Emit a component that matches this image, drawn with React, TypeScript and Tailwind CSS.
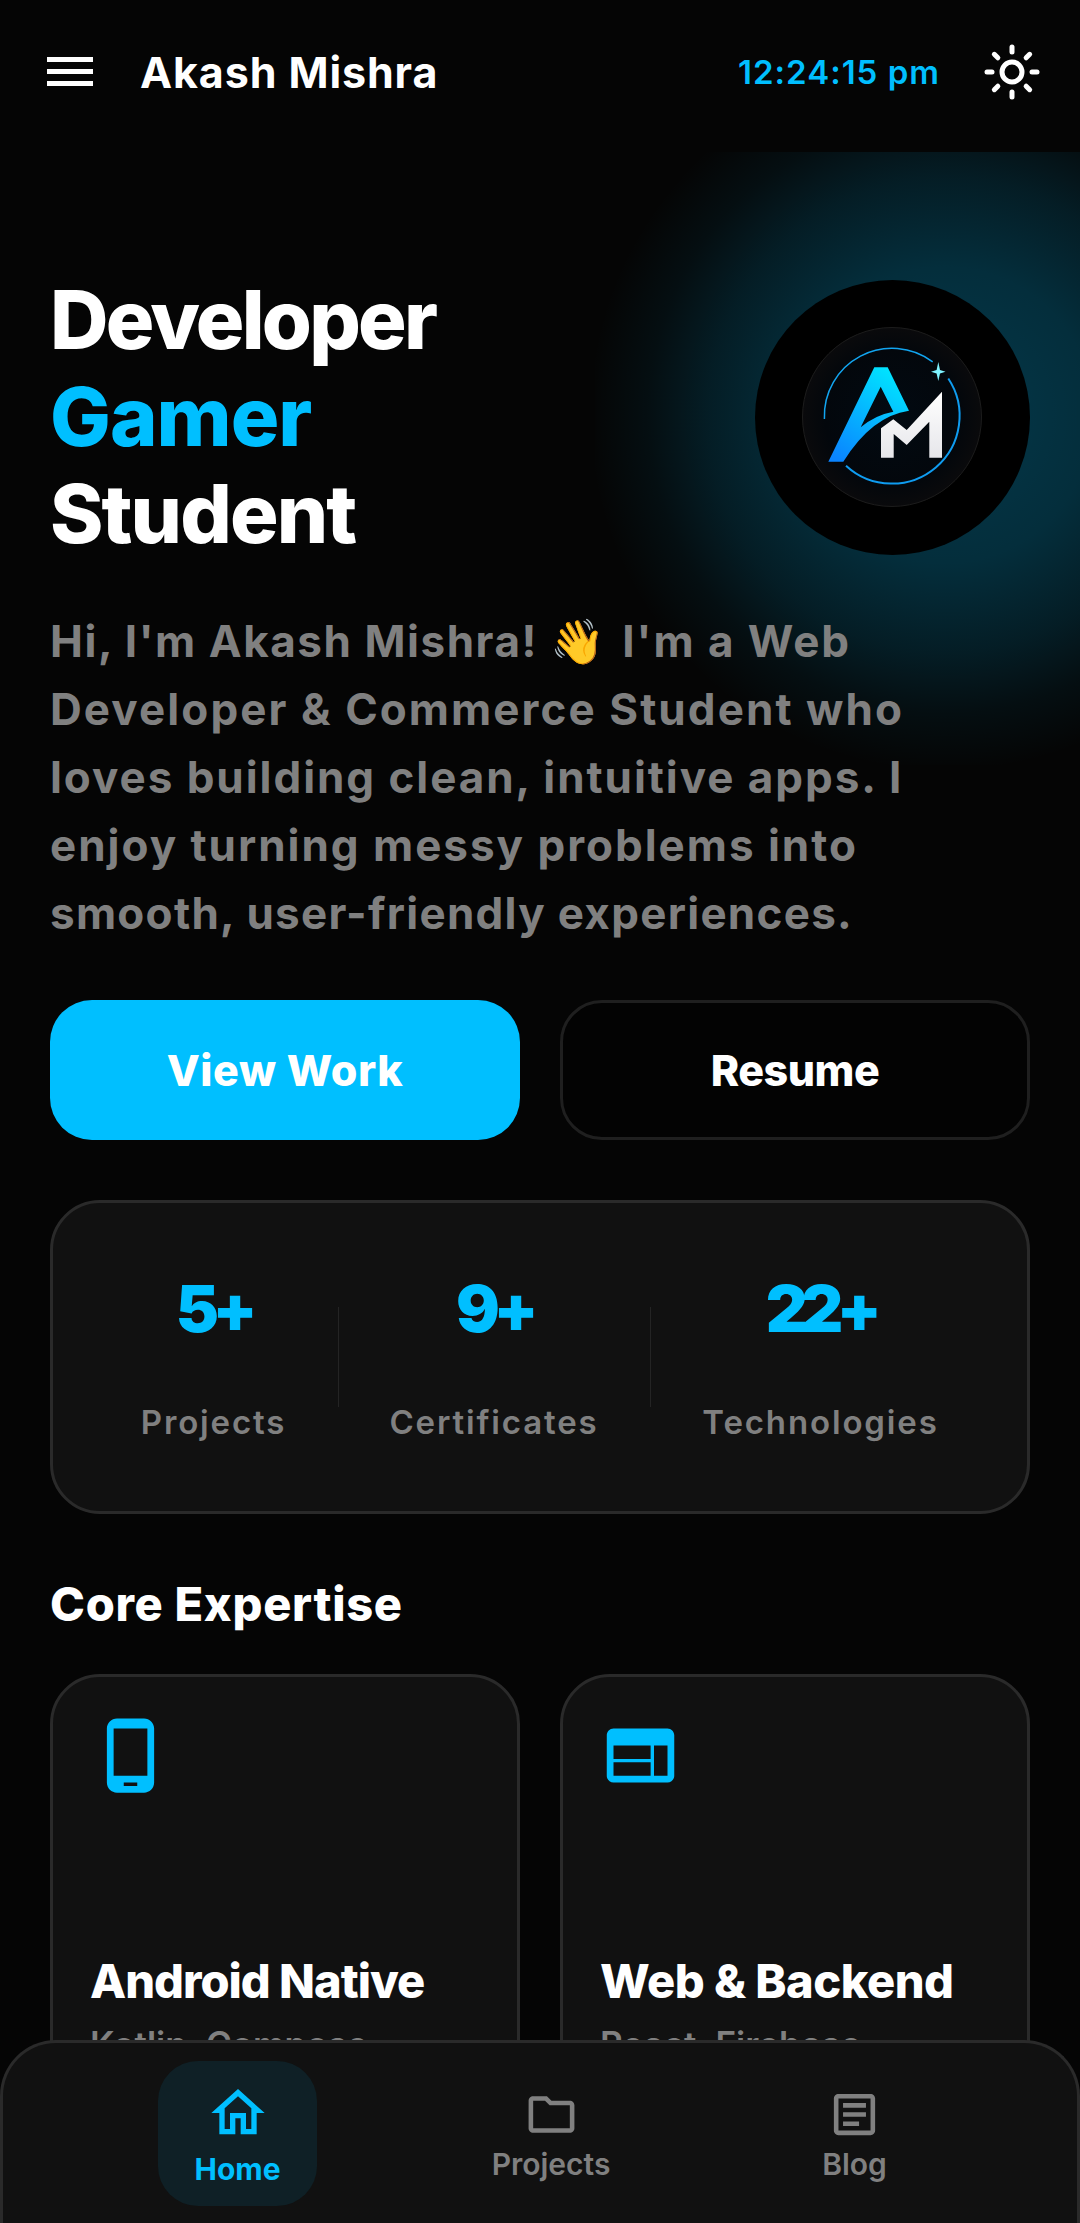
import React from "react";
import { Sun } from "lucide-react";
import { MdOutlineHome, MdOutlineFolder, MdOutlineArticle, MdOutlinePhoneAndroid, MdWeb } from "react-icons/md";

function Logo() {
  return (
    <svg viewBox="755 280 275 275" className="w-[275px] h-[275px] block">
      <defs>
        <linearGradient id="a" x1="0.75" y1="0" x2="0.15" y2="1">
          <stop offset="0" stopColor="#00e5ff" />
          <stop offset="1" stopColor="#0a84ff" />
        </linearGradient>
        <linearGradient id="m" x1="0" y1="0" x2="0" y2="1">
          <stop offset="0" stopColor="#ffffff" />
          <stop offset="1" stopColor="#e6e6ea" />
        </linearGradient>
        <radialGradient id="d" cx="0.5" cy="0.5" r="0.5">
          <stop offset="0" stopColor="#020a12" />
          <stop offset="0.75" stopColor="#03070c" />
          <stop offset="1" stopColor="#0a0a0c" />
        </radialGradient>
      </defs>
      <circle cx="892.5" cy="417.5" r="137.5" fill="#000" />
      <circle cx="892" cy="417" r="89.5" fill="url(#d)" stroke="#1c1c1c" strokeWidth="1" />
      <path d="M932.7 361.9 A67.7 67.7 0 0 0 824.4 419" fill="none" stroke="#12a5f0" strokeWidth="1.5" />
      <path d="M948.3 378.5 A67.7 67.7 0 0 1 846 465.7" fill="none" stroke="#0f9cf0" strokeWidth="2" />
      <path d="M828.3 461.7 L874.3 367.3 L887.7 367.3 L909 410.7 Q871.7 416 843.3 461.7 Z M880.7 386.7 L860.7 427.3 Q875 415 893.3 411.7 Z" fill="url(#a)" fillRule="evenodd" />
      <path d="M881 428.3 L881 457.7 L893.7 457.7 L893.7 434 L906.7 445 L929.3 421.7 L929.3 457.7 L942 457.7 L942 391.7 L906.7 430 L893.3 419.3 Z" fill="url(#m)" />
      <path d="M938.3 362 L940 370 L945.5 371.7 L940 373.4 L938.3 381 L936.6 373.4 L931 371.7 L936.6 370 Z" fill="#7ff3ff" />
    </svg>
  );
}

function Stat({ value, label, w }: { value: string; label: string; w: string }) {
  return (
    <div className={`flex flex-col items-center ${w}`}>
      <div className="text-[65px] leading-[72px] font-black tracking-[-6.5px] text-[#00bfff] whitespace-nowrap">{value}</div>
      <div className="mt-[57px] text-[33px] leading-[40px] font-semibold tracking-[1.85px] text-[#808080] whitespace-nowrap">{label}</div>
    </div>
  );
}

function Divider() {
  return <div className="w-[1px] h-[100px] bg-[#242424] shrink-0" />;
}

function Card({ icon, title, sub, t }: { icon: React.ReactNode; title: string; sub: string; t: string }) {
  return (
    <div className="h-[440px] rounded-[50px] border-[3px] border-[#2a2a2a] bg-[#111111] pl-[37px] pt-[38px]">
      <div className="text-[#00bfff] h-[80px]">{icon}</div>
      <div className={`mt-[156px] text-[47px] leading-[60px] font-extrabold text-white whitespace-nowrap ${t}`}>{title}</div>
      <div className="mt-[10px] text-[35px] leading-[46px] font-semibold text-[#808080] whitespace-nowrap">{sub}</div>
    </div>
  );
}

export default function App() {
  return (
    <div className="relative h-[2223px] overflow-hidden bg-[#050505] font-['Inter','Liberation_Sans',sans-serif] text-white">
      <div className="absolute left-[595px] top-[65px] w-[700px] h-[700px] bg-[radial-gradient(circle,rgba(0,191,255,0.28)_0%,rgba(0,191,255,0.22)_30%,rgba(0,191,255,0.13)_48%,rgba(0,191,255,0.05)_60%,rgba(0,191,255,0)_72%)]" />

      <header className="relative h-[152px] bg-[#050505] flex items-start pt-[44px] pl-[47px] pr-[38px]">
        <div className="flex flex-col gap-[7px] w-[46px] mt-[13px]">
          <div className="h-[5px] bg-white" />
          <div className="h-[5px] bg-white" />
          <div className="h-[5px] bg-white" />
        </div>
        <div className="ml-[47px] text-[43px] leading-[56px] font-bold tracking-[0.9px] whitespace-nowrap">Akash Mishra</div>
        <div className="ml-auto mt-[6px] text-[33px] leading-[44px] font-semibold tracking-[1px] text-[#00bfff] whitespace-nowrap">12:24:15 pm</div>
        <Sun size={60} strokeWidth={2} className="ml-[42px] -mt-[2px] text-white" />
      </header>

      <main className="relative px-[50px] pt-[120px]">
        <div className="flex items-center justify-between">
          <div className="text-[81px] leading-[97px] font-extrabold">
            <div className="tracking-[-2.8px]">Developer</div>
            <div className="tracking-[-1px] text-[#00bfff]">Gamer</div>
            <div className="tracking-[-1.9px]">Student</div>
          </div>
          <div className="rounded-full">
            <Logo />
          </div>
        </div>

        <p className="mt-[44px] text-[44px] leading-[68px] font-bold text-[#808080] whitespace-nowrap">
          <span className="block tracking-[1.95px]">
            <span className="tracking-[1.55px]">Hi, I'm Akash Mishra! </span>
            <span className="mr-[3px]">👋</span> I'm a Web
          </span>
          <span className="block tracking-[2.08px]">Developer &amp; Commerce Student who</span>
          <span className="block tracking-[1.95px]">loves building clean, intuitive apps. I</span>
          <span className="block tracking-[1.98px]">enjoy turning messy problems into</span>
          <span className="block tracking-[1.28px]">smooth, user-friendly experiences.</span>
        </p>

        <div className="mt-[53px] grid grid-cols-2 gap-[40px]">
          <button className="h-[140px] rounded-[42px] bg-[#00bfff] text-[43px] tracking-[0.6px] font-extrabold text-white">View Work</button>
          <button className="h-[140px] rounded-[42px] border-[3px] border-[#1f1f1f] bg-[#030303] text-[43px] tracking-[-0.5px] font-extrabold text-white">Resume</button>
        </div>

        <div className="mt-[60px] h-[314px] rounded-[50px] border-[3px] border-[#2a2a2a] bg-[#111111] flex items-center justify-center gap-[52px]">
          <Stat value="5+" label="Projects" w="w-[144px]" />
          <Divider />
          <Stat value="9+" label="Certificates" w="w-[207px]" />
          <Divider />
          <Stat value="22+" label="Technologies" w="w-[236px]" />
        </div>

        <h2 className="mt-[60px] text-[47px] leading-[60px] font-extrabold tracking-[0.7px]">Core Expertise</h2>

        <div className="mt-[40px] grid grid-cols-2 gap-[40px]">
          <Card icon={<MdOutlinePhoneAndroid size={81} />} title="Android Native" sub="Kotlin, Compose" t="tracking-[-1px]" />
          <Card icon={<MdWeb size={81} />} title="Web & Backend" sub="React, Firebase" t="tracking-[-0.5px]" />
        </div>
      </main>

      <nav className="absolute left-0 right-0 bottom-0 h-[183px] rounded-t-[56px] border-[3px] border-b-0 border-[#2a2a2a] bg-[#111111] flex items-start pl-[155px] pt-[18px]">
        <div className="w-[159px] h-[145px] rounded-[40px] bg-[#0f2026] flex flex-col items-center pt-[20px] text-[#00bfff]">
          <MdOutlineHome size={64} />
          <div className="mt-[4px] text-[30px] leading-[40px] font-bold whitespace-nowrap">Home</div>
        </div>
        <div className="w-[118px] ml-[175px] flex flex-col items-center pt-[26px] text-[#808080]">
          <MdOutlineFolder size={55} />
          <div className="mt-[2px] text-[30px] leading-[40px] font-semibold whitespace-nowrap">Projects</div>
        </div>
        <div className="w-[63px] ml-[213px] flex flex-col items-center pt-[26px] text-[#808080]">
          <MdOutlineArticle size={55} />
          <div className="mt-[2px] text-[30px] leading-[40px] font-semibold whitespace-nowrap">Blog</div>
        </div>
      </nav>
    </div>
  );
}
